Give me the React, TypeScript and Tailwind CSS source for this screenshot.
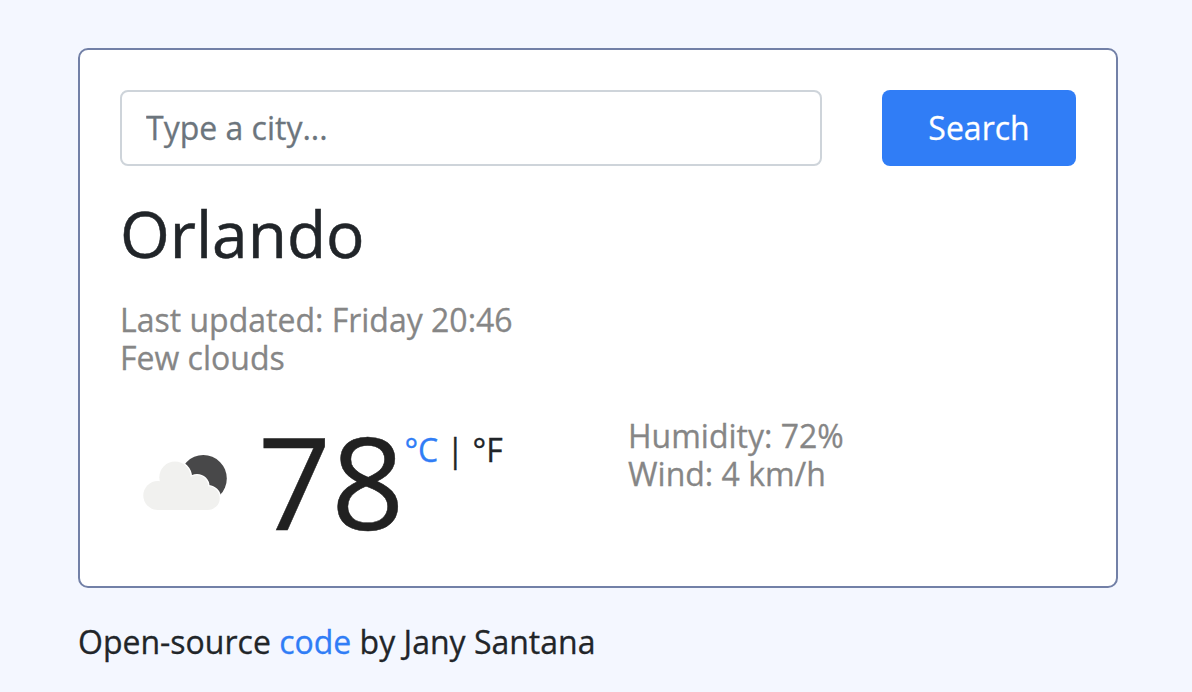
export default function App() {
  return (
    <div className="h-[692px] overflow-hidden bg-[#f4f7ff] pl-[78px] pt-12 font-['Open_Sans','Noto_Sans',sans-serif] text-[32px] leading-[38px] text-[#212529] [-webkit-text-stroke:0.3px_currentColor]">
      <main className="h-[540px] w-[1040px] rounded-[10px] border-2 border-[#7280a7] bg-white p-10">
        <form className="flex h-[76px] justify-between">
          <input aria-label="City" placeholder="Type a city..." className="h-[76px] w-[702px] rounded-lg border-2 border-[#ced4da] bg-white px-6 pb-0.5 outline-none placeholder:text-[#6c757d] placeholder:[-webkit-text-stroke:0.3px_#6c757d]" />
          <button type="button" className="h-[76px] w-[194px] rounded-lg bg-[#307df6] text-white [-webkit-text-stroke:0.3px_white]">Search</button>
        </form>
        <h1 className="mt-[30px] text-[64px] leading-[76px] [-webkit-text-stroke:0.5px_#212529]">Orlando</h1>
        <ul className="mt-[29px] text-[#868686] [-webkit-text-stroke:0.3px_#868686]">
          <li>Last updated: Friday 20:46</li>
          <li>Few clouds</li>
        </ul>
        <div className="mt-10 flex">
          <div className="flex w-[508px]">
            <svg viewBox="120 432 138 100" className="mt-[15px] h-[100px] w-[138px] shrink-0" aria-hidden="true">
              <circle cx="203.3" cy="478.5" r="23.5" fill="#484849" />
              <g fill="#f1f1ef" stroke="white" strokeWidth="2.6">
                <circle cx="157.8" cy="495.6" r="14.6" />
                <circle cx="175" cy="477.3" r="15.8" />
                <circle cx="197" cy="486.5" r="11.3" />
                <circle cx="207.8" cy="498.2" r="12" />
              </g>
              <g fill="#f1f1ef">
                <circle cx="157.8" cy="495.6" r="14.5" />
                <circle cx="175" cy="477.3" r="15.7" />
                <circle cx="197" cy="486.5" r="11.2" />
                <circle cx="207.8" cy="498.2" r="11.9" />
                <path d="M158 484H207V510H158Z" />
              </g>
            </svg>
            <strong className="text-[128px] font-normal leading-[128px] text-[#212121] [-webkit-text-stroke:0.5px_#212121]">78</strong>
            <div className="mt-[14px]"><a href="#c" className="text-[#307df6] [-webkit-text-stroke:0.3px_#307df6]">°C</a> | <a href="#f">°F</a></div>
          </div>
          <ul className="text-[#868686] [-webkit-text-stroke:0.3px_#868686]"><li>Humidity: 72%</li><li>Wind: 4 km/h</li></ul>
        </div>
      </main>
      <footer className="mt-[35px]">Open-source <a href="#code" className="text-[#307df6] [-webkit-text-stroke:0.3px_#307df6]">code</a> by Jany Santana</footer>
    </div>
  );
}
